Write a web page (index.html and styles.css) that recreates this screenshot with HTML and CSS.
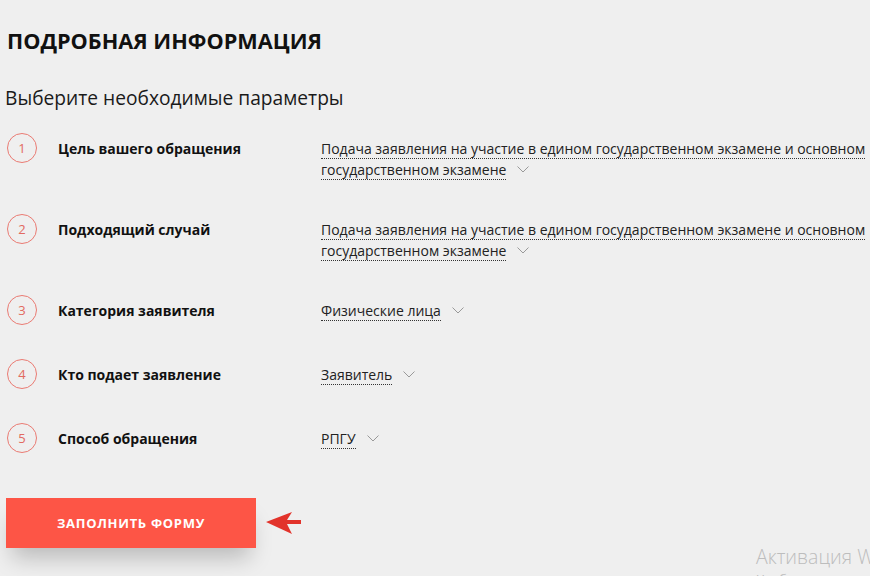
FILE: index.html
```html
<!DOCTYPE html>
<html lang="ru">
<head>
<meta charset="utf-8">
<link rel="stylesheet" href="styles.css">
</head>
<body>
<div class="page">
  <h1 class="title">ПОДРОБНАЯ ИНФОРМАЦИЯ</h1>
  <h2 class="subtitle">Выберите необходимые параметры</h2>
  <div class="steps">
    <div class="step">
      <div class="num">1</div>
      <div class="label">Цель вашего обращения</div>
      <div class="value"><span class="dotted">Подача заявления на участие в едином государственном экзамене и основном государственном экзамене</span><svg class="chev" viewBox="0 0 12 7" width="12" height="7"><path d="M0.5 0.5 L6 6 L11.5 0.5" fill="none" stroke="#999" stroke-width="1"/></svg></div>
    </div>
    <div class="step">
      <div class="num">2</div>
      <div class="label">Подходящий случай</div>
      <div class="value"><span class="dotted">Подача заявления на участие в едином государственном экзамене и основном государственном экзамене</span><svg class="chev" viewBox="0 0 12 7" width="12" height="7"><path d="M0.5 0.5 L6 6 L11.5 0.5" fill="none" stroke="#999" stroke-width="1"/></svg></div>
    </div>
    <div class="step">
      <div class="num">3</div>
      <div class="label">Категория заявителя</div>
      <div class="value"><span class="dotted">Физические лица</span><svg class="chev" viewBox="0 0 12 7" width="12" height="7"><path d="M0.5 0.5 L6 6 L11.5 0.5" fill="none" stroke="#999" stroke-width="1"/></svg></div>
    </div>
    <div class="step">
      <div class="num">4</div>
      <div class="label">Кто подает заявление</div>
      <div class="value"><span class="dotted">Заявитель</span><svg class="chev" viewBox="0 0 12 7" width="12" height="7"><path d="M0.5 0.5 L6 6 L11.5 0.5" fill="none" stroke="#999" stroke-width="1"/></svg></div>
    </div>
    <div class="step">
      <div class="num">5</div>
      <div class="label">Способ обращения</div>
      <div class="value"><span class="dotted">РПГУ</span><svg class="chev" viewBox="0 0 12 7" width="12" height="7"><path d="M0.5 0.5 L6 6 L11.5 0.5" fill="none" stroke="#999" stroke-width="1"/></svg></div>
    </div>
  </div>
  <div class="actions">
    <button class="btn">ЗАПОЛНИТЬ ФОРМУ</button>
    <svg class="arrow" viewBox="0 0 38 24" width="38" height="24"><path d="M1 11 L27 1 L22 9 L36 9 L36 13 L22 13 L27 23 Z" fill="#e2332b"/></svg>
  </div>
</div>
<div class="watermark">
  <div class="wm1">Активация Windows</div>
  <div class="wm2">Чтобы активировать Windows, перейдите в раздел "Параметры".</div>
</div>
</body>
</html>
```

FILE: styles.css
```css
html, body {
  margin: 0;
  padding: 0;
  background: #efefef;
  overflow: hidden;
  height: 576px;
}
body {
  font-family: "Open Sans", "Noto Sans", sans-serif;
  color: #111;
  position: relative;
}
.page {
  padding: 27px 0 0 7px;
}
.title {
  margin: 0;
  font-size: 21.7px;
  font-weight: 700;
  line-height: 28px;
  color: #111;
}
.subtitle {
  margin: 30px 0 0 -2px;
  font-size: 19.2px;
  font-weight: 400;
  line-height: 26px;
  color: #1a1a1a;
}
.steps {
  margin-top: 22px;
  display: flex;
  flex-direction: column;
  gap: 34px;
}
.step {
  display: flex;
  align-items: flex-start;
}
.num {
  width: 28px;
  height: 28px;
  border: 1px solid #ea7b73;
  border-radius: 50%;
  display: flex;
  align-items: center;
  justify-content: center;
  font-size: 13px;
  color: #e26a60;
  flex: none;
}
.label {
  width: 263px;
  margin-left: 21px;
  padding-top: 5px;
  font-size: 14px;
  font-weight: 700;
  line-height: 21px;
  color: #111;
  flex: none;
}
.value {
  padding-top: 5px;
  font-size: 14px;
  line-height: 21px;
  color: #222;
  width: 549px;
}
.dotted {
  border-bottom: 1px dotted #333;
}
.chev {
  margin-left: 11px;
  vertical-align: 2px;
}
.actions {
  margin-top: 45px;
  margin-left: -1px;
  display: flex;
  align-items: center;
}
.btn {
  width: 250px;
  height: 50px;
  border: none;
  background: #fd5546;
  color: #fff;
  font-family: "Open Sans", "Roboto", sans-serif;
  font-weight: 700;
  font-size: 13px;
  letter-spacing: 0.7px;
  box-shadow: 0 16px 22px -6px rgba(0,0,0,0.22);
  padding: 0;
}
.arrow {
  margin-left: 9px;
}
.watermark {
  position: absolute;
  left: 756px;
  top: 543px;
  color: #bdbdbd;
  white-space: nowrap;
}
.wm1 {
  font-size: 19.5px;
  font-weight: 300;
  line-height: 27px;
}
.wm2 {
  font-size: 13px;
  line-height: 18px;
}
```
